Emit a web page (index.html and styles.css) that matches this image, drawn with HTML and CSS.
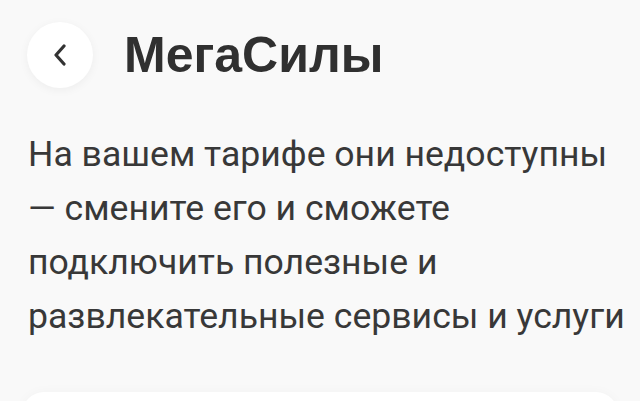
FILE: index.html
```html
<!DOCTYPE html>
<html lang="ru">
<head>
<meta charset="utf-8">
<link rel="stylesheet" href="styles.css">
</head>
<body>
<div class="page">
  <header class="header">
    <button class="back" aria-label="Назад">
      <svg width="14" height="22" viewBox="0 0 14 22"><path d="M11 2 L3 11 L11 20" fill="none" stroke="#333" stroke-width="3.2" stroke-linecap="round" stroke-linejoin="round"/></svg>
    </button>
    <h1 class="title">МегаСилы</h1>
  </header>
  <p class="text"><span class="line">На вашем тарифе они недоступны</span> <span class="line">— смените его и сможете</span> <span class="line">подключить полезные и</span> <span class="line">развлекательные сервисы и услуги</span></p>
  <div class="card"></div>
</div>
</body>
</html>
```
FILE: styles.css
```css
html, body {
  margin: 0;
  padding: 0;
  background: #f9f9f9;
  overflow: hidden;
}
.page {
  width: 640px;
  height: 401px;
  overflow: hidden;
}
.header {
  display: flex;
  align-items: center;
  padding: 22px 0 0 27px;
  gap: 31px;
}
.back {
  width: 66px;
  height: 66px;
  border-radius: 50%;
  border: none;
  background: #fff;
  box-shadow: 0 2px 10px rgba(0,0,0,0.05);
  display: flex;
  align-items: center;
  justify-content: center;
  padding: 0;
}
.title {
  margin: 0;
  font-family: "Liberation Sans", Arial, sans-serif;
  font-weight: bold;
  font-size: 50px;
  color: #303030;
}
.text {
  margin: 39px 0 0 28px;
  font-family: Roboto, sans-serif;
  font-size: 35.6px;
  line-height: 54px;
  color: #383838;
}
.line {
  display: block;
  white-space: nowrap;
}
.card {
  margin: 49px 22px 0;
  height: 80px;
  background: #fff;
  border-radius: 22px;
  box-shadow: 0 0 12px rgba(0,0,0,0.03);
}
```
